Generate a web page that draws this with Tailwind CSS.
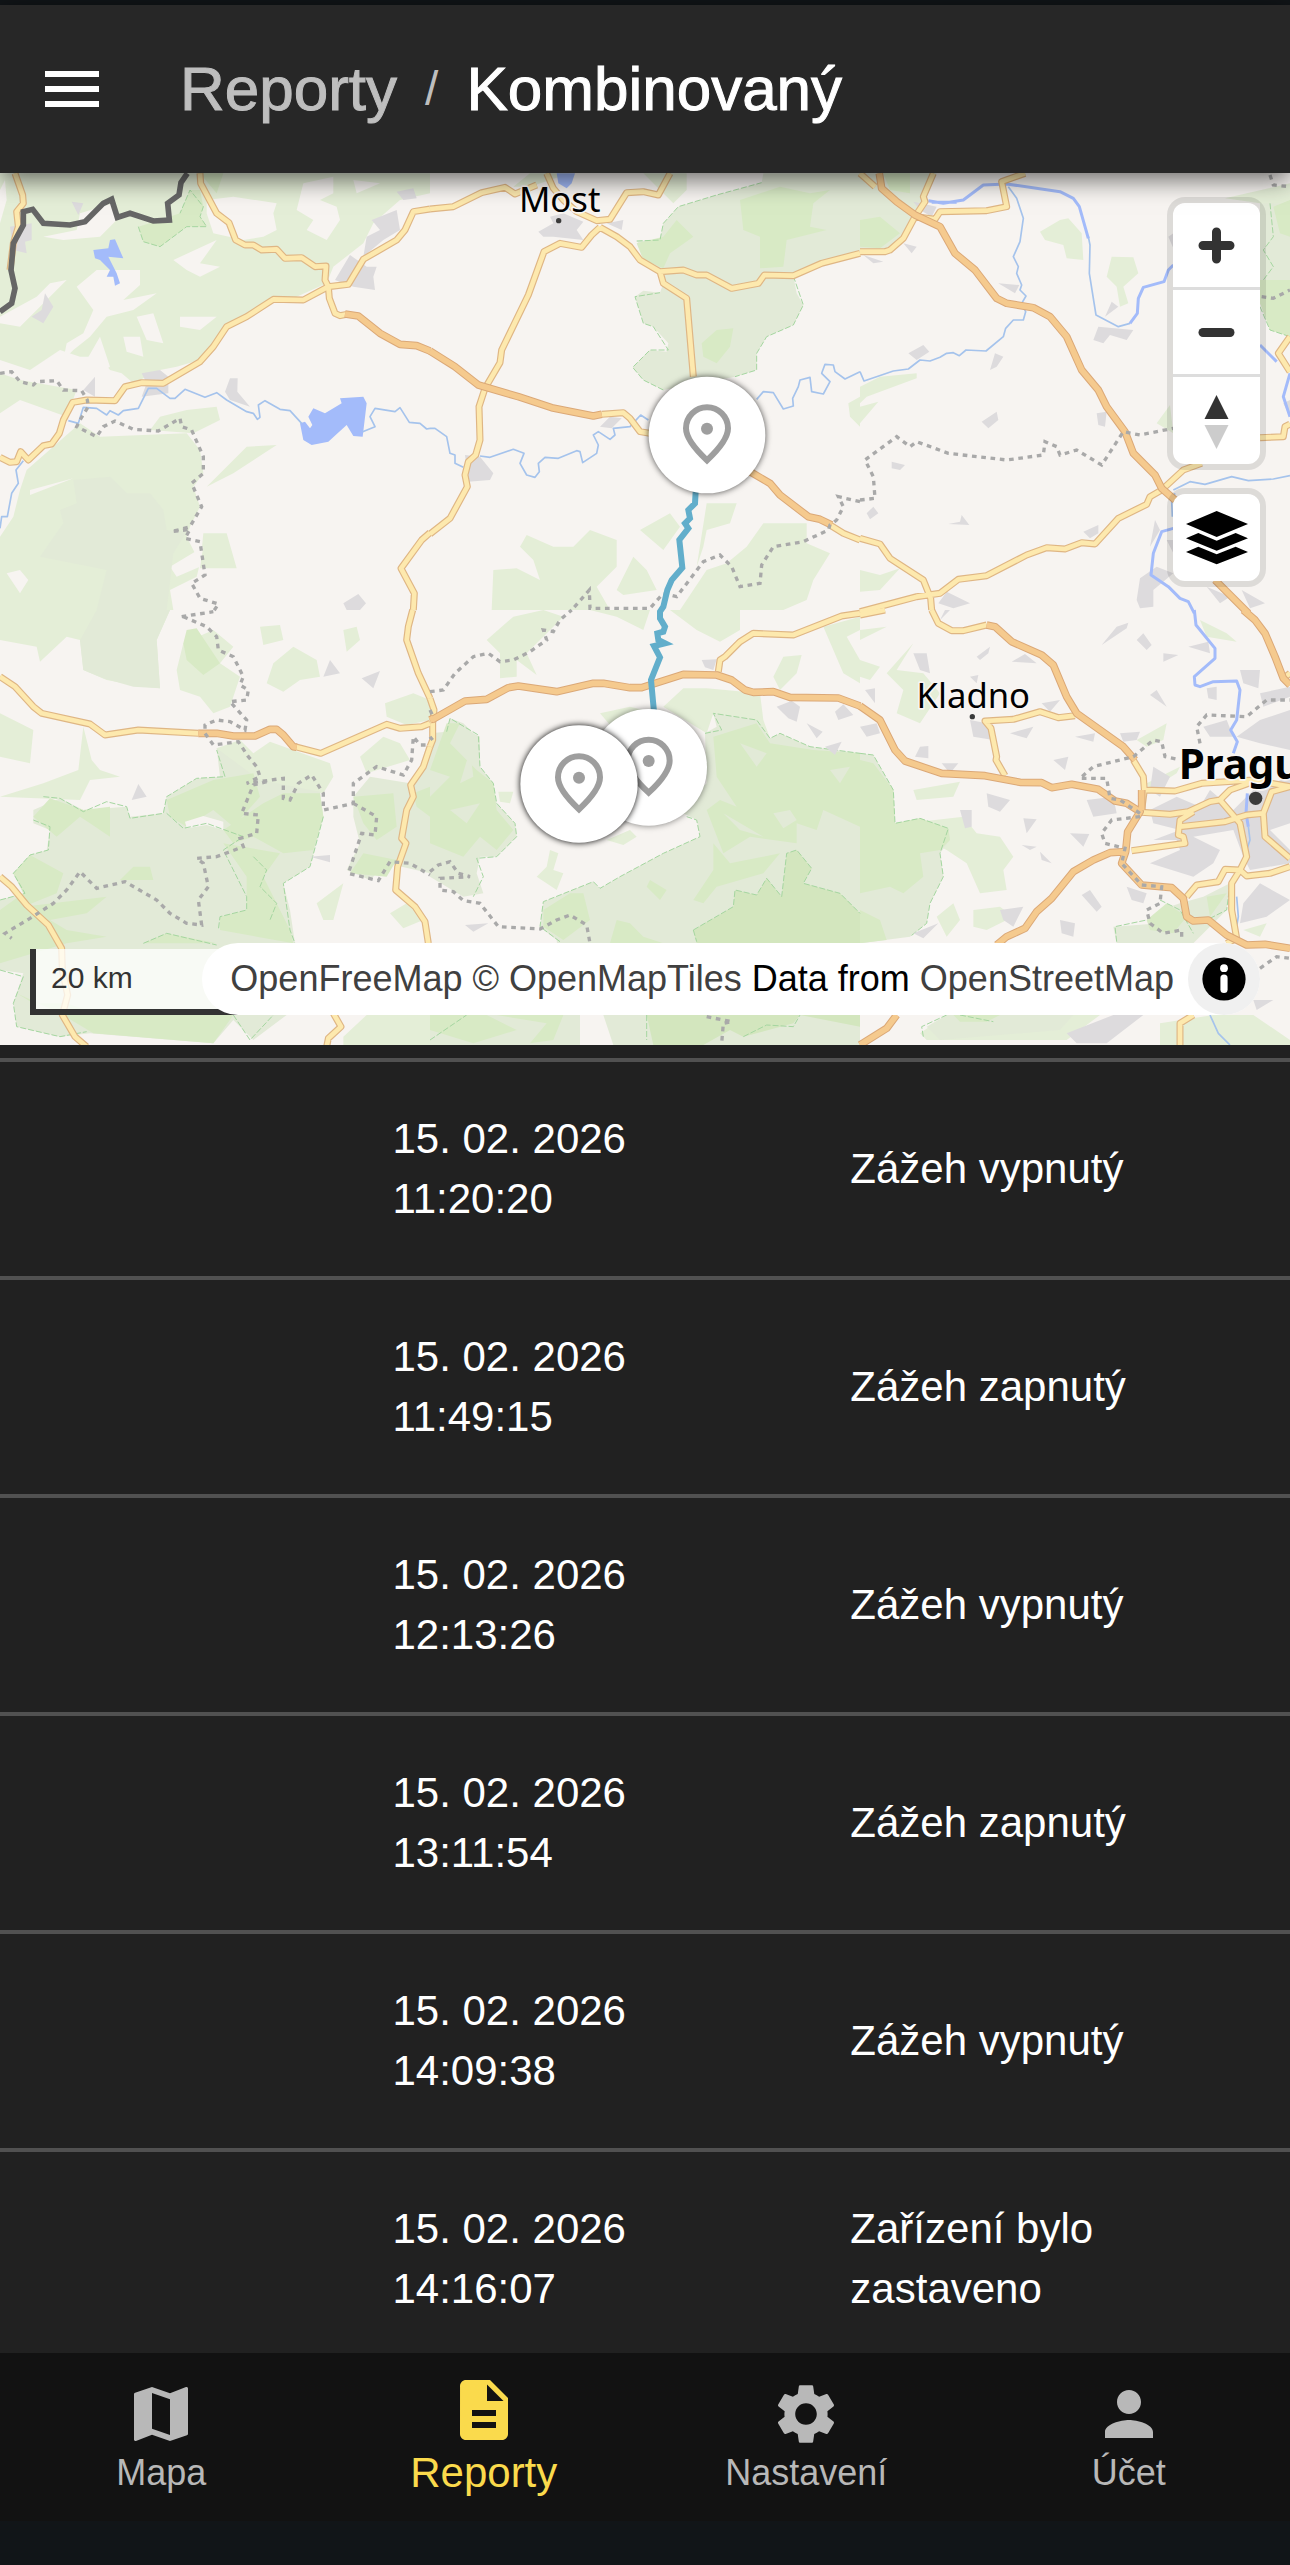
<!DOCTYPE html>
<html lang="cs">
<head>
    <meta charset="UTF-8">
    <meta name="viewport" content="width=device-width, initial-scale=1.0">
    <title>Reporty / Kombinovaný</title>
    <script src="https://cdn.jsdelivr.net/npm/@tailwindcss/browser@4"></script>
</head>
<body class="bg-[#111518] text-white font-['Liberation_Sans',Arial,sans-serif]">
<div class="flex flex-col h-screen pt-[5px] pb-11 overflow-hidden">

    <!-- Header -->
    <header class="relative z-10 shrink-0 h-[168px] px-9 flex items-center gap-[72px] bg-[#272727] shadow-[0_6px_24px_rgba(0,0,0,0.6)]">
        <button type="button" aria-label="Menu">
            <svg class="size-[72px]" viewBox="0 0 24 24" fill="currentColor"><path d="M3 18h18v-2H3v2zm0-5h18v-2H3v2zm0-7v2h18V6H3z"/></svg>
        </button>
        <nav class="flex items-center gap-7 text-[62px] leading-[96px] [-webkit-text-stroke:1px]">
            <a href="#reports" class="text-[#bebebe]">Reporty</a>
            <span class="text-5xl text-[#bebebe] [-webkit-text-stroke:0]">/</span>
            <h1>Kombinovaný</h1>
        </nav>
    </header>

    <!-- Map -->
    <section class="relative flex-2 min-h-0 overflow-hidden bg-[#f7f4f1]">
        <svg class="block size-full" viewBox="0 519 3870 2616" preserveAspectRatio="xMidYMid slice">
            <defs>
                <g id="minor">
                    <path d="M45 10 68 75 70 100 50 125 55 170 40 220 30 300 M600 10 602 40 650 130 687 158 707 210 735 225 760 225 785 240 830 238 855 265 905 263 945 290 978 288 975 330 985 350 988 385 1005 430 1020 437 1040 433 M0 862 30 877 50 875 62 845 85 870 130 827 155 822 178 790 190 750 218 697 260 690 345 692 375 650 425 638 490 640 600 575 640 530 680 470 740 440 820 388 910 390 985 350 1045 343 1090 268 1190 210 1215 180 1240 125 1290 117 M1290 1088 1265 1110 1203 1195 1243 1270 1240 1320" transform="translate(0 510)"/>
                    <path d="M0 117 70 110 155 68 225 52 255 72 320 45 M350 10 370 55 400 90 440 125 500 152 540 148 590 68 640 65 685 75 720 10 M510 172 560 200 600 230 630 270 690 305 700 340 770 385 790 620 M690 305 760 300 800 315 830 315 905 355 985 340 1003 315 1090 317 1175 280 1290 250 M510 172 485 195 455 232 390 220 342 245 295 375 215 540 210 578 165 655 147 710 150 810 137 855 115 875 105 915 112 950 60 1045 0 1092 M515 733 580 728 600 745 630 785 660 790 M1200 1065 1240 1090 1290 1110" transform="translate(1290 510)"/>
                    <path d="M0 10 45 50 M220 10 190 80 195 95 165 140 130 205 90 240 75 245 0 245 M165 140 225 148 240 125 380 122 440 110 425 35 495 10 M0 1105 60 1122 90 1165 190 1230 212 1285 215 1320 M0 1325 20 1320 170 1280 240 1270 295 1228 380 1217 500 1155 560 1133 615 1137 665 1118 705 1122 775 1045 860 1003 870 980 905 960 970 900 1025 880 M1200 803 1270 800 1275 770 1290 762 M1290 500 1255 550 1290 605" transform="translate(2580 510)"/>
                    <path d="M0 200 45 230 100 290 125 310 270 342 315 375 415 360 595 370 M885 410 962 430 1160 343 1200 355 1265 350 1290 340 M1238 0 1225 50 1220 90 1255 190 1290 265 M1290 410 1270 470 1232 525 1240 560 1220 600 1205 685 1218 700 1193 770 1187 840 1245 890 1275 935 1285 1000 M0 800 35 830 80 885 145 945 185 1015 187 1080 203 1155 187 1215 225 1280 260 1310 M1000 1210 1023 1250 985 1285 980 1310" transform="translate(0 1830)"/>
                    <path d="M865 185 870 150 885 140 930 95 970 70 1090 75 1235 18 1290 10 M0 265 12 300 8 340 8 390 0 410" transform="translate(1290 1830)"/>
                    <path d="M0 15 75 0 M215 0 235 40 275 62 310 62 380 45 M645 317 595 323 540 305 460 328 375 333 393 355 410 440 408 450 435 497 M820 450 850 500 853 540 845 600 M853 540 945 543 1025 520 1180 510 1290 530 M845 607 930 613 985 605 1050 575 1080 570 1110 540 1180 515 M815 722 975 700 970 680 955 675 960 630 1000 605 M960 650 1095 635 1160 615 1210 610 1235 545 1290 530 M1080 570 1140 640 1160 740 1140 780 1115 820 1115 900 1130 985 1100 1000 M1140 780 1160 798 1230 790 1290 770 M1140 780 1095 778 1075 815 1010 825 980 860 M1210 610 1215 680 1290 745 M1000 1215 960 1240 960 1305 M1270 205 1290 190" transform="translate(2580 1830)"/>
                </g>
                <g id="major">
                    <path d="M1035 432 1075 438 1140 490 1200 523 1250 527 1290 543" transform="translate(0 510)"/>
                    <path d="M0 543 75 590 145 645 265 680 365 713 490 738 515 733 M960 905 1020 940 1050 975 1135 1040 1170 1048 1205 1065" transform="translate(1290 510)"/>
                    <path d="M58 10 65 55 110 95 165 135 240 170 285 250 345 300 410 385 440 400 520 413 570 440 620 500 665 600 715 660 740 710 795 785 820 850 885 915 905 955 945 990 M1065 1230 1165 1330" transform="translate(2580 510)"/>
                    <path d="M595 370 650 370 700 378 765 378 810 358 830 358 850 375 880 410 890 412 M1290 330 1300 325" transform="translate(0 1830)"/>
                    <path d="M5 330 105 273 170 268 235 233 265 228 380 245 490 220 520 220 600 233 635 233 760 193 860 195 905 210 945 240 970 247 1030 245 1080 262 1225 264 1290 288" transform="translate(1290 1830)"/>
                    <path d="M0 288 60 330 105 420 135 453 245 490 375 497 480 517 545 518 575 533 635 523 715 538 765 573 800 580 840 605 803 665 797 725 750 728 700 750 640 785 575 865 530 905 495 955 440 980 410 1005 M380 45 405 50 455 95 545 135 580 165 620 260 650 310 790 410 825 450 M845 540 845 600 M797 725 785 760 845 825 935 833 970 865 980 920 1000 933 1045 930 1100 975 1160 1005 1215 1003 1290 1015 M1150 0 1185 30 1215 70 1245 140 1270 205 1290 225 M110 1215 80 1255 0 1305" transform="translate(2580 1830)"/>
                </g>
                <g id="pin">
                    <path d="M0 76C-30 48-63 12-63-20A63 63 0 0 1 63-20C63 12 30 48 0 76Z" fill="none" stroke="#9e9e9e" stroke-width="18"/>
                    <circle cy="-19" r="18" fill="#9e9e9e"/>
                </g>
            </defs>

            <!-- Woods -->
            <g fill="#e4eed7">
                <g transform="translate(0 510)">
                    <path d="M0 10H1290V70L1200 90 1120 160 1090 220 1000 290 980 340 880 385 820 380 740 440 680 470 640 540 600 570 530 590 480 600 400 640 365 610 330 600 300 560 240 560 180 540 90 600 0 570Z"/>
                    <path d="M80 900 240 760 300 800 560 790 600 840 610 910 580 950 600 1010 570 1070 560 1100 600 1180 590 1220 510 1260 520 1320H0V1100L40 1040 60 960ZM620 950 740 830 830 825 700 910ZM610 1090 680 1090 710 1195 600 1195ZM480 740 560 720 650 710 660 750 580 790 450 780ZM0 610 60 630 230 660 200 740 60 690 0 730Z"/>
                </g>
                <g transform="translate(1290 510)">
                    <path d="M640 10H770V60L730 100 690 60ZM250 50 300 10H420L300 50ZM185 1320 190 1200 260 1195 330 1230 310 1170 270 1130 290 1095 370 1130 430 1130 480 1080 560 1110 560 1190 500 1250 540 1320ZM560 1260 610 1160 650 1200 680 1260 580 1275ZM630 1080 720 1030 750 1070 700 1140ZM800 1190 830 1000 920 1000 900 1060 830 1080 820 1130ZM750 1320 830 1200 890 1180 950 1130 1000 1060 1130 1060 1130 1120 1200 1150 1150 1230 1130 1290 1060 1320ZM1255 700 1290 680V770L1260 740Z"/>
                </g>
                <g transform="translate(2580 510)">
                    <path d="M540 185 600 150 625 145 665 190 670 270 620 265 610 225 555 210ZM755 260 820 262 835 310 790 350 805 400 780 410 770 350 740 320ZM0 650 60 620 170 610 170 625 20 680 0 700ZM0 710 55 695 0 760ZM0 1200 60 1215 120 1195 60 1260 0 1265ZM890 760 930 705 940 790ZM1095 85 1290 40V200H1240L1200 100Z"/>
                </g>
                <g transform="translate(0 1830)">
                    <path d="M0 0H510L470 90 480 235 430 230 320 210 250 180 240 90 200 80 120 155 110 110 0 90ZM0 310 100 360 90 460 0 440ZM250 350 275 450 300 480 360 500 270 510 240 570 0 560 130 520 235 480ZM780 50 840 45 850 90 790 105ZM1030 60 1070 50 1080 90 1040 125ZM820 160 880 110 950 150 960 200 900 210 850 245 800 220ZM1155 280 1240 250 1290 270V330L1220 345 1160 320ZM530 180 550 100 640 60 700 110 660 160 720 200 690 290 640 310 600 260 540 240ZM650 415 720 390 760 430 810 395 990 460 1000 500 970 550 780 520 680 510ZM1080 440 1150 380 1200 400 1230 450 1100 490ZM950 880 1030 820 1000 930 970 930ZM1170 910 1220 880 1270 930 1210 955ZM1030 1280 1100 1215H1290V1305H1030Z"/>
                </g>
                <g transform="translate(1290 1830)">
                    <path d="M170 90 250 20 340 0 400 20 330 90 290 130 320 195 260 150 260 200 210 205 210 130ZM510 310 600 290 640 300 540 345ZM700 290 760 235 830 235 990 250 1000 330 1020 385 850 310 830 370ZM720 0H930V60L870 95 800 60ZM1030 200 1060 140 1115 135 1100 190 1050 240ZM1180 50 1290 20V60L1250 80 1290 150V220L1240 190ZM320 800 350 770 360 720 385 730 370 780 400 790 380 840ZM530 690 600 660 620 680 580 705ZM205 545 250 545 240 580 210 575ZM480 0H660L640 60 560 20Z"/>
                </g>
                <g transform="translate(2580 1830)">
                    <path d="M0 60 80 50 0 90ZM0 150 60 170 30 210 0 200ZM80 190 160 100 110 180 190 190 240 250 180 340 110 310 130 240ZM160 540 300 515 280 560 170 570ZM140 640 310 620 350 670 420 680 460 740 430 780 440 840 360 850 320 760 260 720 180 680ZM340 900 420 890 460 920 380 960 340 950ZM230 920 280 880 300 930 260 980ZM830 390 920 340 910 390 860 410ZM1020 30 1100 70 1130 95 1040 80ZM860 520 960 470 950 490 870 540ZM1150 960 1220 940 1200 980ZM180 1270 260 1215H720L620 1290H200ZM900 1240 1060 1215H1180L1290 1290V1305H900Z"/>
                </g>
            </g>

            <!-- Clearings -->
            <g fill="#f7f4f1">
                <g transform="translate(0 510)">
                    <path d="M620 90 700 80 830 100 820 130 830 180 790 200 730 210 640 190 620 130ZM910 40 1000 20 1000 70 960 90 1010 110 1020 150 980 210 920 180 940 150 890 120ZM130 200 230 180 240 130 340 100 350 150 300 200 190 210ZM230 350 290 300 420 300 420 345 370 390 470 370 400 420 320 440 270 500 220 540 190 570 200 520 250 490 280 420ZM520 270 650 210 600 280 660 290 600 320 560 300ZM370 500 420 500 430 560 380 545ZM410 440 460 430 490 520 440 510ZM0 440 110 380 150 340 200 330 90 440 60 470 0 460ZM150 580 260 570 300 500 330 590 250 640ZM1060 30 1140 40 1070 70ZM0 60 15 30 20 90 0 160ZM540 440 650 440 600 480 540 470Z"/>
                    <path d="M90 960 220 925 90 975ZM20 1210 60 1200 85 1230 60 1270ZM510 1190 560 1160 610 1130 600 1190 530 1220Z"/>
                </g>
            </g>

            <!-- Protected areas -->
            <g fill="#e2ead7">
                <path d="M220 930 330 920 380 970 450 970 490 1020 500 1080 560 1085 520 1150 500 1320H290L320 1200 120 1160 190 1060 180 1020 230 1000Z" transform="translate(0 510)"/>
                <path d="M620 213 690 210 700 160 745 110 860 75 995 38 1000 10H1290V255L1170 285 1090 318 1100 370 1120 405 1090 465 1010 500 980 550 980 600 915 620 700 660 640 630 608 592 660 540 710 545 715 520 670 470 640 460 615 380 640 362 690 368 700 340 690 300Z" transform="translate(1290 510)"/>
                <path d="M0 10H230L200 80 160 130 130 200 80 240H0ZM1200 100H1290V500L1240 480 1200 400Z" transform="translate(2580 510)"/>
                <path d="M240 90 290 0H510L470 90 480 235 400 230 310 205 250 180ZM100 600 180 565 250 600 380 590 390 620 490 610 500 560 590 505 660 500 650 415 780 510 960 545 970 620 930 770 850 820 870 900 885 1000 860 1215 760 1290 700 1230 640 1300 270 1270 180 1280 50 1250 40 1180 70 1090 0 1080V870L70 850 40 790 90 735 140 720 150 660 100 640ZM1060 560 1110 500 1230 520 1290 430V790L1160 760 1110 810 1040 780 1080 700 1060 620Z" transform="translate(0 1830)"/>
                <path d="M0 370 50 365 60 325 100 340 130 370 150 380 150 470 190 520 200 580 255 640 260 680 200 740 150 740 140 790 160 850 100 860 0 800ZM340 875 490 815 510 835 570 800 700 730 810 680 800 630 740 600 830 520 825 370 860 350 850 310 980 330 1020 385 1050 370 1140 410 1290 430V1305H550L520 1215H450V1305H0V1215H400L380 990 330 950Z" transform="translate(1290 1830)"/>
                <path d="M0 430 40 435 100 540 105 640 180 625 265 655 270 690 240 730 250 800 210 880 200 940 150 980 0 1000ZM760 950 900 940 900 900 960 880 1030 860 1110 820 1100 900 1000 1000H770ZM260 1215H640L600 1260 240 1290 200 1250Z" transform="translate(2580 1830)"/>
            </g>
            <g fill="#d8eac5">
                <path d="M415 170 480 150 540 130 570 60 600 60 610 110 600 140 620 170 560 170 480 230 430 215ZM600 10H670L650 70Z" transform="translate(0 510)"/>
                <path d="M930 90 1050 50 1140 70 1200 60 1150 100 1140 170 1190 180 1070 210 1060 290 990 295 990 200 940 180ZM620 220 700 200 740 150 790 200 720 250 700 295 640 270ZM815 520 860 480 910 475 900 530 860 580 820 560Z" transform="translate(1290 510)"/>
                <path d="M0 150 60 140 120 190 60 235 0 230ZM70 10H150V70L90 60ZM1200 330 1290 330V500L1230 480 1200 400ZM1240 110 1290 90V200L1260 190Z" transform="translate(2580 510)"/>
                <path d="M550 100 560 60 590 55 620 100 660 160 610 195 560 150ZM100 620 150 565 250 600 330 590 330 680 270 640 240 620 170 680ZM500 570 640 510 760 490 780 560 700 650 640 600 560 650 510 620ZM790 580 850 550 960 550 970 620 940 720 850 730 760 680 700 700 670 660ZM90 735 190 790 170 850 70 890 320 860 260 910 150 930 200 960 320 980 200 1000 0 1060V900L70 850 40 790ZM660 920 740 900 740 800 670 700 840 730 790 800 870 960 880 1000 660 960ZM50 1150 180 1210 280 1270 640 1300 700 1215 540 1215 300 1215 200 1180 100 1180ZM430 1000 500 970 650 1000ZM360 810 400 770 450 770 460 810ZM1060 560 1180 550 1190 650 1130 690 1090 640ZM1050 790 1090 730 1190 750 1160 800ZM1240 550 1290 530V620L1250 590Z" transform="translate(0 1830)"/>
                <path d="M50 340 90 340 60 400 140 480 190 520 200 600 250 660 200 720 150 680 100 740 0 700V560L60 500 0 480ZM850 380 980 340 1020 400 1150 420 1290 430V650L1180 600 1160 660 1100 640 1100 700 960 680 880 730 830 600 870 570 920 590 860 500ZM660 810 710 840 690 870 650 830ZM340 900 420 850 460 850 480 930 400 990 340 950ZM560 930 600 940 640 980 700 1000H540ZM850 700 900 760 1050 730 1000 790 860 830 820 880 790 870 850 780ZM0 1215H170L260 1260 130 1300 0 1260ZM200 1215H400L370 1290 300 1300 350 1240Z" transform="translate(1290 1830)"/>
                <path d="M0 450 40 460 100 540 105 640 180 625 265 655 270 690 240 720 180 730 190 800 130 850 90 830 0 850ZM0 900 60 930 80 990 0 1000ZM280 1215H420L380 1235 300 1235ZM860 930 920 880 980 920 940 970 870 960ZM1040 860 1100 850 1050 920Z" transform="translate(2580 1830)"/>
            </g>
            <g fill="#d3e6be">
                <path d="M790 960 910 890 915 840 980 855 1010 805 1055 860 1070 730 1100 720 1145 775 1120 820 1230 850 1290 910V1250L1110 1215 1090 1240 940 1280 900 1260 820 1305H670L650 1215 800 1000Z" transform="translate(1290 1830)"/>
            </g>
            <g fill="#e2ead7" transform="translate(1290 1830)">
                <path d="M930 400 1010 430 980 470ZM1200 480 1260 470 1230 520ZM880 610 1000 680 930 660ZM120 420 90 520 130 500ZM60 600 150 580 110 640ZM1030 610 1080 600 1100 630 1060 655Z"/>
            </g>
            <path d="M555 635 610 618 670 635 670 660 620 645 560 655Z" fill="#f7f4f1" transform="translate(0 1830)"/>

            <!-- Protected area outlines -->
            <g fill="none" stroke="#a5d6a0" stroke-width="3" stroke-dasharray="18 6">
                <path d="M415 170 430 215 480 230 560 170 620 170 600 140 610 110 570 60 540 130" transform="translate(0 510)"/>
                <path d="M620 213 690 210 700 160 745 110 860 75 995 38M1090 318 1120 405 1090 465 1010 500 980 550 980 600 915 620M700 660 640 630 608 592 660 540 715 540 670 470 640 460 615 380 690 368" transform="translate(1290 510)"/>
                <path d="M1230 100 1240 200 1210 240 1240 290 1210 330M1200 410 1230 480 1290 500" transform="translate(2580 510)"/>
                <path d="M130 560 180 565 250 605 320 575 380 590 390 625 490 610 500 560 590 505 675 500 650 420M500 610 550 655 620 640 730 680 670 720 740 860 740 900 660 920 655 960M100 630 150 650 145 720 90 735 40 790 75 850 0 870M970 620 930 770 850 820 870 960 885 1000M430 1000 500 970 650 1005M760 740 800 780 780 830 830 880 810 930M0 1080 70 1100 40 1180 50 1250 180 1280 260 1265M700 1215 750 1290 820 1215" transform="translate(0 1830)"/>
                <path d="M50 365 60 325 145 375 150 470 190 520 200 580 255 640 260 680 200 740 140 745 160 800 130 860M390 995 330 950 340 875 490 815 510 835 570 800 700 730 810 680 800 630 770 620M825 370 875 360 850 310 980 330 1020 385 1050 370 1140 410 1290 430M790 960 910 890 915 840 980 855 1010 805 1055 860 1070 730 1100 720 1145 775 1120 820 1230 850 1290 910M790 960 800 995M650 1215 650 1290M940 1280 1010 1245 1090 1250 1110 1215M0 1290 110 1215" transform="translate(1290 1830)"/>
                <path d="M0 430 40 435 100 540 105 640 180 625 265 655 240 730 250 800 210 880 200 940 150 980M770 995 765 950 860 930M900 870 960 900 1000 970M1110 820 1100 900 1040 930M190 1280 185 1250 260 1215M300 1215 400 1235" transform="translate(2580 1830)"/>
            </g>

            <!-- Built-up areas -->
            <g fill="#dddbdd">
                <path d="M30 170 95 160 95 210 75 215 80 250 40 240ZM95 440 125 420 135 370 160 410 130 460ZM1005 330 1050 255 1100 290 1130 290 1120 320 1125 360 1060 350ZM1115 150 1190 120 1200 180 1150 210 1090 260 1100 200 1140 180ZM1190 65 1240 55 1250 85 1210 90ZM425 610 480 600 505 620 505 670 425 680 440 640ZM675 665 690 625 713 625 712 665 750 710 690 690ZM1030 1300 1075 1272 1098 1300 1080 1320H1040ZM250 660 285 620 285 680ZM215 95 250 100 235 135Z" transform="translate(0 510)"/>
                <path d="M325 185 370 160 360 140 400 130 460 155 440 180 460 210 370 200 340 200ZM530 160 580 150 575 180ZM115 935 105 855 150 860 190 910 180 930ZM510 770 540 740 575 745 545 775Z" transform="translate(1290 510)"/>
                <path d="M160 95 230 110 215 140 180 120ZM145 550 190 525 208 545 170 570ZM390 600 405 550 430 560 410 590ZM415 340 478 345 465 370ZM735 440 755 395 775 410ZM700 510 715 470 820 480 800 510 750 495 730 520ZM365 755 410 725 415 750 385 775ZM710 730 740 725 735 770 715 765ZM95 875 135 885 120 900 95 895ZM20 1030 40 1010 55 1030 30 1048ZM265 1062 300 1055 305 1035 328 1065ZM670 1085 715 1065 715 1090 690 1105ZM235 1300 260 1265 330 1300 280 1315ZM830 1290 840 1225 890 1190 940 1210 880 1260 880 1310 840 1315ZM870 1130 885 1050 900 1080ZM920 1110H940V1150ZM130 220 170 230 155 250ZM10 255 70 275 40 280ZM1040 1250 1110 1280 1080 1300ZM1145 1260 1215 1300 1170 1315ZM925 200 940 190V235ZM1270 700 1290 690V740Z" transform="translate(2580 510)"/>
                <path d="M395 570 415 522 440 560ZM970 200 990 150 1020 190ZM1085 205 1140 183 1120 235ZM930 740 990 735 990 757Z" transform="translate(0 1830)"/>
                <path d="M815 150 860 148 850 180 825 172ZM1040 290 1085 272 1110 290 1100 335 1075 325ZM1215 305 1240 283 1270 315 1225 330ZM1130 340 1178 365 1160 385ZM1185 410 1235 395 1215 435ZM105 945 175 940 130 965Z" transform="translate(1290 1830)"/>
                <path d="M870 600 950 560 1020 590 1050 540 1120 600 1180 540 1290 500V640L1230 660 1290 720V760L1170 780 1150 740 1120 660 1000 680 1080 720 1060 760 1000 800 870 760 960 720 950 690 880 690 960 660 880 640ZM680 570 760 560 770 610 700 620ZM380 550 450 570 420 605 385 590ZM490 625 530 628 500 670ZM630 670 688 672 670 710ZM665 855 690 840 725 890 710 905ZM600 930 645 940 640 980 605 970ZM455 155 495 132 530 160ZM350 140 390 110 385 130 360 150ZM160 130 200 130 210 190 180 180ZM15 240 45 235 45 280ZM0 350 50 340 60 370 20 380ZM165 440 180 410 205 408 205 445ZM245 460 295 460 270 490ZM330 330 380 340 400 390 340 380ZM545 280 600 270 570 305ZM450 370 520 350 500 385ZM580 450 625 440 615 480ZM645 380 705 370 700 395ZM725 105 770 50 805 38 800 55ZM830 90 850 70 875 105 860 120ZM910 130 955 135 910 155ZM985 110 1045 95 1050 130ZM870 255 890 240 920 290ZM1040 235 1070 230 1070 270 1045 265ZM1140 180 1200 180 1195 235 1150 220ZM1200 250 1290 230V260L1210 290ZM1030 350 1100 330 1120 380 1050 380ZM1130 380 1200 330 1290 300V420L1200 400ZM780 370 840 365 830 390 790 395ZM540 725 575 760 545 750ZM485 705 530 710 510 720ZM420 900 490 890 460 950 430 930ZM300 600 335 600 335 650 315 655ZM160 970 235 940 190 985ZM620 1270 760 1215H850L740 1300H650ZM800 830 860 850 850 880 815 870ZM1150 880 1200 820 1290 870 1220 920 1140 940ZM330 200 355 195 350 220ZM1180 1170 1240 1170 1190 1200ZM240 30 270 0H255ZM880 470 930 500 900 560 870 540Z" transform="translate(2580 1830)"/>
            </g>

            <!-- Water -->
            <g fill="#a3bbfa">
                <path d="M280 240 325 235 330 210 345 208 370 265 325 260 350 310 360 340 345 347 340 320 320 320 330 300 300 270 285 265ZM900 760 915 755 930 775 937 765 925 740 940 715 975 730 1025 700 1020 685 1090 680 1100 700 1088 800 1060 798 1040 765 985 815 935 825 910 810Z" transform="translate(0 510)"/>
                <path d="M380 10H435L425 40 410 55 385 40Z" transform="translate(1290 510)"/>
            </g>
            <g fill="none" stroke="#a5c3ec" stroke-width="5" stroke-linejoin="round">
                <path d="M205 752 235 760 250 712 290 715 320 735 330 722 355 735 370 722 415 715 445 655 470 655 510 685 525 685 555 658 615 682 650 668 680 690 740 725 760 730 772 748 780 742 775 705 795 692 840 718 870 722 905 760M1088 785 1125 770 1110 740 1125 715 1185 725 1200 713 1228 757 1260 760 1280 777 1290 775M70 872 48 900 55 940 35 970 22 1040 5 1040 0 1075" transform="translate(0 510)"/>
                <path d="M0 775 15 775 50 800 60 850 75 855 75 880 100 892M150 858 180 862 250 838 282 850 270 880 290 915 315 922 328 905 325 880 345 862 385 865 440 842 450 845 458 878 500 850 505 825 490 795 505 785 540 808 555 795 550 775 600 770 632 735 655 750M980 688 1000 665 1030 668 1060 717 1090 708 1088 685 1105 650 1110 630 1140 622 1145 665 1180 672 1200 635 1175 610 1185 583 1210 585 1215 605 1245 627 1290 605" transform="translate(1290 510)"/>
                <path d="M445 50 470 85 490 145 480 215 460 260 475 290 470 310 485 345 480 360 498 378 485 400 497 425 490 450 460 450 437 475 430 500 378 543 318 540 298 557 280 548 260 550 240 562 210 573 180 570 145 597 100 603 12 633 0 605M685 200 690 225 688 310 708 435 775 470 810 460M940 960 990 935 1035 943 1115 920 1165 932 1240 927 1290 917M945 970 935 990 937 1040" transform="translate(2580 510)"/>
                <path d="M1165 650 1170 690 1160 720M1130 860 1135 920 1130 950M1050 1215 1075 1270 1110 1305" transform="translate(2580 1830)"/>
            </g>
            <g fill="none" stroke="#a3bbfa" stroke-width="9" stroke-linejoin="round">
                <path d="M205 92 250 100 310 90 370 45 440 42 600 65 640 85 658 110 685 205M215 97 290 97M810 460 832 430 835 385 850 352 912 335 925 300 940 285M1200 525 1250 575M1290 610 1270 680 1290 740M940 1075 905 1085 880 1150 873 1215 925 1250 960 1285 985 1295 1003 1330" transform="translate(2580 510)"/>
                <path d="M1003 0 1008 45 1065 115 1065 145 1003 200 1005 225 1020 230 1060 215 1130 213 1140 240 1130 330 1112 360 1132 395 1120 430M1162 550 1158 610 1165 650" transform="translate(2580 1830)"/>
            </g>

            <!-- Roads: casing first, then fill -->
            <g fill="none" stroke-linejoin="round">
                <use href="#minor" stroke="#dfb684" stroke-width="21"/>
                <use href="#minor" stroke="#fde9ae" stroke-width="14"/>
                <use href="#major" stroke="#dba877" stroke-width="23"/>
                <use href="#major" stroke="#f5ca8e" stroke-width="17"/>
            </g>

            <!-- Borders -->
            <g fill="none" stroke="#a9a9a9" stroke-width="10" stroke-dasharray="14 14">
                <path d="M0 610 35 605 60 635 100 645 110 635 170 632 190 660 245 662 262 690 265 710 240 750 230 770 290 800 310 770 345 753 400 778 475 783 540 745 545 770 575 780 610 860 610 910 575 940 605 1010 570 1070 515 1085 570 1078 555 1105 600 1115 615 1215 575 1240 600 1285 655 1302 640 1325" transform="translate(0 510)"/>
                <path d="M1290 995 1225 980 1240 1010 1220 1050 1200 1065 1195 1080 1120 1115 1030 1130 995 1185 990 1240 930 1250 905 1190 870 1155 820 1175 740 1280 700 1270 660 1315 480 1315 478 1260 425 1320" transform="translate(1290 510)"/>
                <path d="M0 990 45 985 40 920 15 870 110 800 150 830 170 815 265 850 440 870 550 855 555 815 590 830 600 855 650 840 725 885 790 785 840 795 940 775M1230 15 1240 45 1290 50M1205 380 1240 385 1290 360" transform="translate(2580 510)"/>
                <path d="M545 20 640 5M550 20 620 50 650 80 655 120 700 140 730 200 720 225 745 240 740 270 690 275 740 330 735 360 690 335 650 330 615 345 615 370 640 405 715 395 745 440 770 470 780 500 740 520 850 505 850 565 870 570 895 520 935 495 970 550 970 600 1060 580 1060 520 1130 470 1210 495 1235 450 1240 380 1260 405 1290 405M800 515 760 525 725 610 775 615 770 670 720 685 730 710 650 740 590 745 610 760 625 830 595 870 605 945 560 940 510 910 470 870 375 815 290 835 240 785 200 840 160 880 90 925 15 970 35 985M1060 580 1130 620 1125 675 1085 670 1045 790 1135 812 1170 755 1230 760 1290 795" transform="translate(0 1830)"/>
                <path d="M0 245 40 240 75 190 130 140 175 130 210 155 250 150 300 125 350 90 340 60 370 65 390 30 425 0M0 785 25 765 60 755 85 790 120 800 30 805 30 840 70 845 100 872 150 880 205 950 330 957 380 930 420 915 470 945 480 1000M830 1220 905 1235 880 1240 875 1300M0 300 10 320M0 380 8 390" transform="translate(1290 1830)"/>
                <path d="M840 610 780 570 750 565 740 505 660 505 700 470 820 440 880 390 905 395 915 440 960 450M1020 400 1010 350 1040 315 1160 320 1220 270 1290 270M840 620 755 630 725 670 735 700 795 715 785 760 845 825 905 830 900 880 860 900 870 940 910 970 965 960 965 990M1200 1075 1250 1040 1290 1045" transform="translate(2580 1830)"/>
            </g>
            <path d="M0 425 35 400 45 355 33 300 40 220 70 165 70 125 98 118 130 160 210 165 255 155 310 100 335 88 352 142 390 130 460 153 508 150 503 100 537 75 543 38 562 10" transform="translate(0 510)" fill="none" stroke="#666" stroke-width="17"/>

            <!-- Route -->
            <path d="M2087 1475 2085 1510 2065 1530 2070 1555 2055 1570 2065 1585 2038 1620 2047 1703 2015 1740 2002 1770 1990 1820 1980 1835 1980 1855 1995 1880 1990 1895 1972 1900 1975 1920 1995 1930 1962 1938 1980 1972 1953 2040 1962 2135" fill="none" stroke="#62aecb" stroke-width="18"/>

            <!-- Places -->
            <g font-family="Noto Sans, sans-serif" font-size="104" text-anchor="middle" fill="#000" stroke="#f9f6f3" stroke-width="10" stroke-linejoin="round" paint-order="stroke">
                <text x="1679" y="637">Most</text>
                <text x="2920" y="2125">Kladno</text>
                <text x="3536" y="2338" font-size="126" font-weight="700" text-anchor="start">Prague</text>
            </g>
            <g fill="#3a3a3a">
                <circle cx="1676" cy="662" r="8"/>
                <circle cx="2917" cy="2150" r="8"/>
                <circle cx="3767" cy="2395" r="20"/>
            </g>

            <!-- Markers -->
            <g class="drop-shadow-[0_0_9px_rgba(0,0,0,0.7)]">
                <circle cx="2121" cy="1305" r="175" fill="#fff"/>
                <use href="#pin" x="2121" y="1305"/>
            </g>
            <g class="drop-shadow-[0_0_9px_rgba(0,0,0,0.5)]">
                <circle cx="1946" cy="2302" r="175" fill="#fff"/>
                <use href="#pin" x="1946" y="2302"/>
            </g>
            <g class="drop-shadow-[0_0_9px_rgba(0,0,0,1)]">
                <circle cx="1737" cy="2352" r="176" fill="#fff"/>
                <use href="#pin" x="1737" y="2352"/>
            </g>
        </svg>

        <!-- Map controls -->
        <div class="absolute top-6 right-6 flex flex-col gap-[18px]">
            <div class="rounded-[18px] border-6 border-black/10 overflow-hidden bg-white bg-clip-padding divide-y-3 divide-[#ddd]">
                <button type="button" aria-label="Přiblížit" class="w-[87px] h-[87px] flex items-center justify-center">
                    <svg class="size-[87px] shrink-0" viewBox="0 0 29 29" stroke="#333" stroke-width="3" stroke-linecap="round"><path d="M10 14.5h9M14.5 10v9"/></svg>
                </button>
                <button type="button" aria-label="Oddálit" class="w-[87px] h-[87px] flex items-center justify-center">
                    <svg class="size-[87px] shrink-0" viewBox="0 0 29 29" stroke="#333" stroke-width="3" stroke-linecap="round"><path d="M10 14.5h9"/></svg>
                </button>
                <button type="button" aria-label="Sever" class="w-[87px] h-[87px] flex items-center justify-center">
                    <svg class="size-[87px] shrink-0" viewBox="0 0 29 29"><path fill="#333" d="m10.5 14 4-8 4 8z"/><path fill="#ccc" d="m10.5 16 4 8 4-8z"/></svg>
                </button>
            </div>
            <div class="rounded-[18px] border-6 border-black/10 overflow-hidden bg-white bg-clip-padding">
                <button type="button" aria-label="Vrstvy" class="block size-[87px]">
                    <svg class="size-full" viewBox="0 0 261 261"><path d="M131 51 225 90 131 129 39 90ZM39 133 76 117 131 140 188 117 225 133 131 170ZM39 174 76 158 131 181 188 158 225 174 131 211Z"/></svg>
                </button>
            </div>
        </div>

        <div class="absolute left-[30px] bottom-[30px] w-60 h-[66px] px-[15px] border-l-6 border-b-6 border-[#333] bg-white/75 text-[#333] text-3xl leading-[57px]">20 km</div>

        <div class="absolute right-[30px] bottom-[30px] h-[72px] pl-7 flex items-center gap-[14px] rounded-full bg-white text-black text-4xl whitespace-nowrap">
            <p><a href="#openfreemap" class="text-[#404040]">OpenFreeMap</a> <a href="#openmaptiles" class="text-[#404040]">© OpenMapTiles</a> Data from <a href="#openstreetmap" class="text-[#404040]">OpenStreetMap</a></p>
            <button type="button" aria-label="Informace o mapě" class="size-[72px] rounded-full bg-[#f0f0f0]">
                <svg class="size-full" viewBox="0 0 24 24"><circle cx="12" cy="12" r="7.2"/><circle cx="12" cy="8.4" r="1.3" fill="#fff"/><path d="M12 11.7v3.8" stroke="#fff" stroke-width="2.4" stroke-linecap="round"/></svg>
            </button>
        </div>
    </section>

    <!-- Events -->
    <main class="flex-3 min-h-0 overflow-hidden bg-[#212121]">
        <table class="w-full mt-[13px] table-fixed border-separate border-spacing-0 border-t-4 border-[#515151] text-[42px] leading-[60px]">
            <colgroup>
                <col class="w-[26.7%]">
                <col class="w-[35.5%]">
                <col>
            </colgroup>
            <tbody class="[&_td]:px-12 [&_td]:py-[47px] [&_td]:border-b-4 [&_td]:border-[#515151]">
                <tr><td></td><td>15. 02. 2026<br>11:20:20</td><td>Zážeh vypnutý</td></tr>
                <tr><td></td><td>15. 02. 2026<br>11:49:15</td><td>Zážeh zapnutý</td></tr>
                <tr><td></td><td>15. 02. 2026<br>12:13:26</td><td>Zážeh vypnutý</td></tr>
                <tr><td></td><td>15. 02. 2026<br>13:11:54</td><td>Zážeh zapnutý</td></tr>
                <tr><td></td><td>15. 02. 2026<br>14:09:38</td><td>Zážeh vypnutý</td></tr>
                <tr><td></td><td>15. 02. 2026<br>14:16:07</td><td>Zařízení bylo zastaveno</td></tr>
            </tbody>
        </table>
    </main>

    <!-- Bottom navigation -->
    <nav class="shrink-0 h-[168px] grid grid-cols-4 bg-[#121212] text-[#b8b8b8] text-4xl">
        <a href="#map" class="flex flex-col items-center justify-center">
            <svg class="size-[72px]" viewBox="0 0 24 24" fill="currentColor"><path d="m20.5 3-.16.03L15 5.1 9 3 3.36 4.9c-.21.07-.36.25-.36.48V20.5c0 .28.22.5.5.5l.16-.03L9 18.9l6 2.1 5.64-1.9c.21-.07.36-.25.36-.48V3.5c0-.28-.22-.5-.5-.5zM15 19l-6-2.11V5l6 2.11V19z"/></svg>
            <span class="leading-[46px]">Mapa</span>
        </a>
        <a href="#reports" aria-current="page" class="flex flex-col items-center justify-center text-[#fada4c]">
            <svg class="size-[72px]" viewBox="0 0 24 24" fill="currentColor"><path d="M14 2H6c-1.1 0-1.99.9-1.99 2L4 20c0 1.1.89 2 1.99 2H18c1.1 0 2-.9 2-2V8l-6-6zm2 16H8v-2h8v2zm0-4H8v-2h8v2zm-3-5V3.5L18.5 9H13z"/></svg>
            <span class="text-[42px] leading-[54px]">Reporty</span>
        </a>
        <a href="#settings" class="flex flex-col items-center justify-center">
            <svg class="size-[72px]" viewBox="0 0 24 24" fill="currentColor"><path d="M19.14 12.94c.04-.3.06-.61.06-.94 0-.32-.02-.64-.07-.94l2.03-1.58c.18-.14.23-.41.12-.61l-1.92-3.32c-.12-.22-.37-.29-.59-.22l-2.39.96c-.5-.38-1.03-.7-1.62-.94l-.36-2.54c-.04-.24-.24-.41-.48-.41h-3.84c-.24 0-.43.17-.47.41l-.36 2.54c-.59.24-1.13.57-1.62.94l-2.39-.96c-.22-.08-.47 0-.59.22L2.74 8.87c-.12.21-.08.47.12.61l2.03 1.58c-.05.3-.09.63-.09.94s.02.64.07.94l-2.03 1.58c-.18.14-.23.41-.12.61l1.92 3.32c.12.22.37.29.59.22l2.39-.96c.5.38 1.03.7 1.62.94l.36 2.54c.05.24.24.41.48.41h3.84c.24 0 .44-.17.47-.41l.36-2.54c.59-.24 1.13-.56 1.62-.94l2.39.96c.22.08.47 0 .59-.22l1.92-3.32c.12-.22.07-.47-.12-.61l-2.01-1.58zM12 15.6c-1.98 0-3.6-1.62-3.6-3.6s1.62-3.6 3.6-3.6 3.6 1.62 3.6 3.6-1.62 3.6-3.6 3.6z"/></svg>
            <span class="leading-[46px]">Nastavení</span>
        </a>
        <a href="#account" class="flex flex-col items-center justify-center">
            <svg class="size-[72px]" viewBox="0 0 24 24" fill="currentColor"><path d="M12 12c2.21 0 4-1.79 4-4s-1.79-4-4-4-4 1.79-4 4 1.79 4 4 4zm0 2c-2.67 0-8 1.34-8 4v2h16v-2c0-2.66-5.33-4-8-4z"/></svg>
            <span class="leading-[46px]">Účet</span>
        </a>
    </nav>
</div>
</body>
</html>
